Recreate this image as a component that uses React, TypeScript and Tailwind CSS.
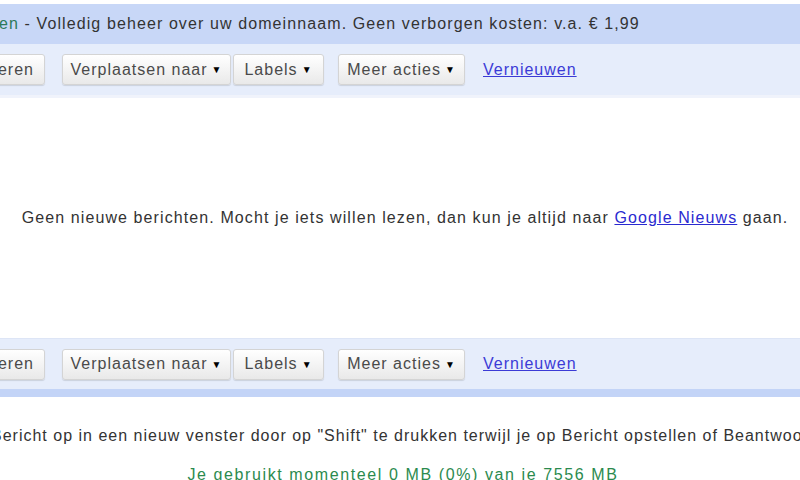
import React from "react";

const font = { fontFamily: '"Liberation Sans", Arial, sans-serif' };

function Btn({ w, children, className = "" }: { w: string; children: React.ReactNode; className?: string }) {
  return (
    <div
      className={`${w} ${className} h-[31px] shrink-0 flex items-center rounded-[3px] border border-[#d4d4d4] bg-gradient-to-b from-[#ffffff] to-[#e9e9e9] text-[16px] tracking-[1px] text-[#4a4a4a] shadow-[0_1px_1px_rgba(0,0,0,0.12)] whitespace-nowrap overflow-hidden`}
    >
      {children}
    </div>
  );
}

const Tri = () => <span className="ml-[4px] text-[10px] text-black">▼</span>;

function Toolbar() {
  return (
    <div className="flex items-center h-full">
      <Btn w="w-[100px]" className="ml-[-55px] justify-end pr-[10px]">Archiveren</Btn>
      <Btn w="w-[169px]" className="ml-[17px] justify-center">Verplaatsen naar<Tri /></Btn>
      <Btn w="w-[91px]" className="ml-[2px] justify-center">Labels<Tri /></Btn>
      <Btn w="w-[127px]" className="ml-[14px] justify-center">Meer acties<Tri /></Btn>
      <a className="ml-[18px] text-[16px] tracking-[1px] text-[#3b3bd6] underline whitespace-nowrap">Vernieuwen</a>
    </div>
  );
}

export default function App() {
  return (
    <div className="w-[800px] h-[480px] overflow-hidden bg-white flex flex-col" style={font}>
      <div className="h-[4px] shrink-0 bg-white" />
      <div className="h-[40px] shrink-0 bg-[#c8d7f7] flex items-center text-[16px] tracking-[1.1px] text-[#333] whitespace-nowrap">
        <span className="text-[#2c7a5a] ml-[-1px]">en</span>
        <span>&nbsp;- Volledig beheer over uw domeinnaam. Geen verborgen kosten: v.a. € 1,99</span>
      </div>
      <div className="h-[51px] shrink-0 bg-[#e6edfb]">
        <Toolbar />
      </div>
      <div className="h-[3px] shrink-0 bg-[#f0f3fb]" />
      <div className="h-[240px] shrink-0 flex items-center justify-center text-[16px] tracking-[1.1px] text-[#333] whitespace-nowrap">
        <span className="ml-[10px]">
          Geen nieuwe berichten. Mocht je iets willen lezen, dan kun je altijd naar{" "}
          <a className="text-[#2a2ad0] underline">Google Nieuws</a> gaan.
        </span>
      </div>
      <div className="h-[51px] shrink-0 bg-[#e6edfb] border-t border-[#dde5f6]">
        <Toolbar />
      </div>
      <div className="h-[8px] shrink-0 bg-[#c3d4f7]" />
      <div className="shrink-0 pt-[30px] leading-[18px] text-[16px] tracking-[1px] text-[#333] whitespace-nowrap">
        <span className="ml-[-9px]">
          Bericht op in een nieuw venster door op "Shift" te drukken terwijl je op Bericht opstellen of Beantwoorden klikt.
        </span>
      </div>
      <div className="shrink-0 pt-[21px] pl-[6px] leading-[18px] text-center text-[16px] tracking-[1.6px] text-[#2b8a4e] whitespace-nowrap">
        Je gebruikt momenteel 0 MB (0%) van je 7556 MB
      </div>
    </div>
  );
}
